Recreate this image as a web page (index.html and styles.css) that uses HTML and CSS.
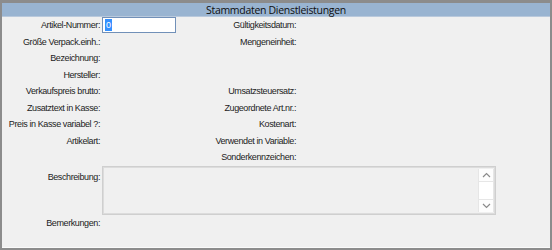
FILE: index.html
```html
<!DOCTYPE html>
<html lang="de">
<head>
    <meta charset="UTF-8">
    <title>Stammdaten Dienstleistungen</title>
    <link rel="stylesheet" href="styles.css">
</head>
<body>

<div class="panel">
    <div class="title-bar">Stammdaten Dienstleistungen</div>

    <div class="fields">
        <label class="lbl">Artikel-Nummer:</label>
        <div class="val"><div class="text-input"><span class="sel">0</span></div></div>
        <label class="lbl">Gültigkeitsdatum:</label>
        <div class="val"></div>

        <label class="lbl">Größe Verpack.einh.:</label>
        <div class="val"></div>
        <label class="lbl">Mengeneinheit:</label>
        <div class="val"></div>

        <label class="lbl">Bezeichnung:</label>
        <div class="val"></div>
        <div></div>
        <div></div>

        <label class="lbl">Hersteller:</label>
        <div class="val"></div>
        <div></div>
        <div></div>

        <label class="lbl">Verkaufspreis brutto:</label>
        <div class="val"></div>
        <label class="lbl">Umsatzsteuersatz:</label>
        <div class="val"></div>

        <label class="lbl">Zusatztext in Kasse:</label>
        <div class="val"></div>
        <label class="lbl">Zugeordnete Art.nr.:</label>
        <div class="val"></div>

        <label class="lbl">Preis in Kasse variabel ?:</label>
        <div class="val"></div>
        <label class="lbl">Kostenart:</label>
        <div class="val"></div>

        <label class="lbl">Artikelart:</label>
        <div class="val"></div>
        <label class="lbl">Verwendet in Variable:</label>
        <div class="val"></div>

        <div></div>
        <div></div>
        <label class="lbl">Sonderkennzeichen:</label>
        <div class="val"></div>
    </div>

    <div class="memo-row">
        <label class="lbl memo-lbl">Beschreibung:</label>
        <div class="memo">
            <div class="memo-text"></div>
            <div class="scrollbar">
                <div class="sb-btn">
                    <svg width="9" height="6" viewBox="0 0 9 6"><path d="M1 5 L4.5 1.5 L8 5" fill="none" stroke="#8a8a8a" stroke-width="1.2"/></svg>
                </div>
                <div class="sb-track"></div>
                <div class="sb-btn">
                    <svg width="9" height="6" viewBox="0 0 9 6"><path d="M1 1 L4.5 4.5 L8 1" fill="none" stroke="#8a8a8a" stroke-width="1.2"/></svg>
                </div>
            </div>
        </div>
    </div>

    <div class="remarks-row">
        <label class="lbl">Bemerkungen:</label>
    </div>
</div>

</body>
</html>
```

FILE: styles.css
```css
* {
    margin: 0;
    padding: 0;
    box-sizing: border-box;
}

html, body {
    width: 552px;
    height: 250px;
    overflow: hidden;
}

body {
    background: #f0f0f0;
    font-family: 'Liberation Sans', Arial, sans-serif;
    color: #1c1c1c;
}

.panel {
    width: 552px;
    height: 250px;
    border: 2px solid #8c8c8c;
    border-top-width: 3px;
    background: #f0f0f0;
    box-shadow: inset 0 -1px 0 #fafafa;
}

.title-bar {
    height: 14px;
    background: #99b4d1;
    border-bottom: 1px solid #b9c9dc;
    font-family: 'Open Sans', sans-serif;
    font-size: 10.5px;
    letter-spacing: -0.3px;
    line-height: 14px;
    text-align: center;
    color: #0e0e0e;
}

.fields {
    display: grid;
    grid-template-columns: 100px 100px 96px 1fr;
    grid-auto-rows: 16.5px;
}

.lbl {
    display: block;
    font-size: 9px;
    letter-spacing: -0.4px;
    line-height: 16.5px;
    text-align: right;
    padding-right: 2px;
    white-space: nowrap;
}

.val {
    display: flex;
    align-items: center;
}

.text-input {
    width: 74px;
    height: 16px;
    background: #fff;
    border: 1px solid #7190b8;
    padding: 1px 2px;
    display: flex;
    align-items: center;
}

.sel {
    background: #3390ff;
    color: #fff;
    font-size: 9px;
    line-height: 12px;
    padding: 0 1px;
}

.memo-row {
    display: flex;
}

.memo-lbl {
    width: 100px;
    line-height: 14px;
    padding-top: 4px;
}

.memo {
    width: 394px;
    height: 49px;
    border: 1px solid #cfcfcf;
    box-shadow: inset 0 0 0 1px #dcdcdc;
    display: flex;
}

.memo-text {
    flex: 1;
}

.scrollbar {
    width: 16px;
    margin: 2px 1px 2px 0;
    background: #e6e6e6;
    display: flex;
    flex-direction: column;
    gap: 1px;
    padding: 0 1px;
}

.sb-btn {
    height: 12px;
    background: #fdfdfd;
    display: flex;
    align-items: center;
    justify-content: center;
}

.sb-track {
    flex: 1;
    background: #fff;
}

.remarks-row {
    width: 100px;
}
```
